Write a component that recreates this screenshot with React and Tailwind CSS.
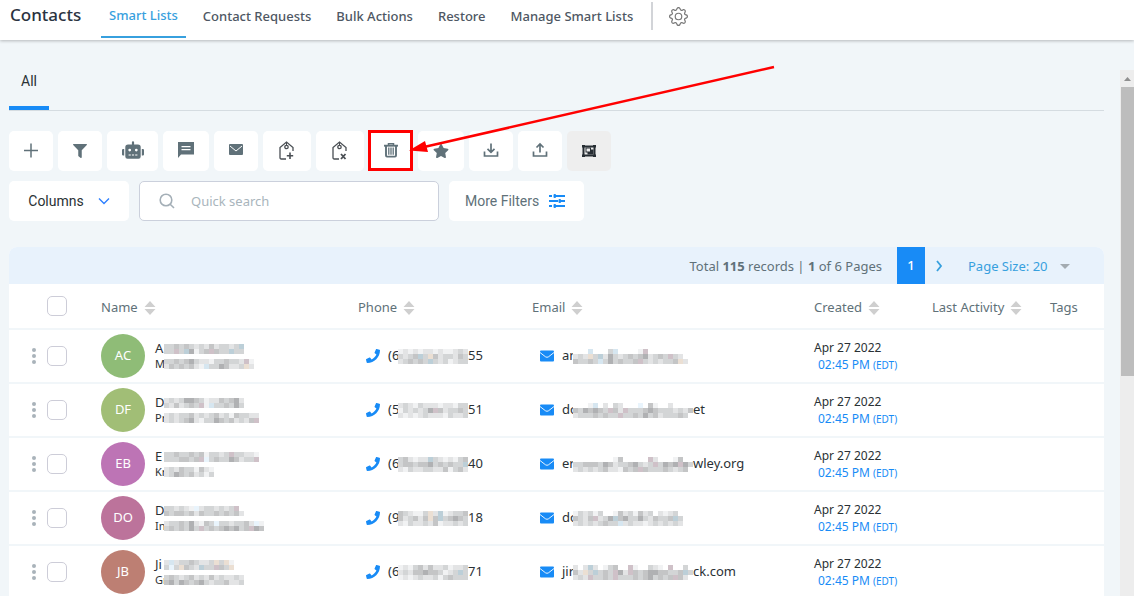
import React from "react";
import { FaFilter, FaRobot, FaStar, FaPhone } from "react-icons/fa";
import { BsGear } from "react-icons/bs";

const NAV = ["Contact Requests", "Bulk Actions", "Restore", "Manage Smart Lists"];

const SHADES = {
  1: "#f1f2f3", 2: "#e3e4e5", 3: "#d3d5d6", 4: "#c4c5c6", 5: "#b0b1b3",
  a: "#d6e6f0", b: "#cfc1c8", c: "#ebdfd3", d: "#bccfd8", e: "#e9f4fc",
};

const ROWS = [
  {
    initials: "AC", color: "bg-[#8fbc77]", first: "A", company: "M",
    name: ["334343232423323d", "33b3d5134b433d33"], org: ["3343453221334332b1", "24343421a3354223c2"],
    phone: ["(6", "55", ["121212212112323", "3234d3c42332433", "234343d32312333"]],
    email: ["an", "", ["000a0003a00001b00000000", "232c3d2532343452343b32", "43343a3534334b3232334c2"]],
  },
  {
    initials: "DF", color: "bg-[#a1be76]", first: "D", company: "Pr",
    name: ["2323554312243452", "3242343b1a334353"], org: ["2323342323423143322", "232345213354342324b"],
    phone: ["(5", "51", ["232132221221332", "1323235b4233434", "2121232221322332"]],
    email: ["do", "et", ["0001a02032000e0410020000", "4354543b42b3334543332324", "233343433b3343534233343"]],
  },
  {
    initials: "EB", color: "bg-[#bd74b5]", first: "E", company: "Kr",
    name: ["3343343413323b33221", "3334434be343354233b"], org: ["23243314210", "2354342313"],
    phone: ["(6", "40", ["342122d32121343", "3443445343433d3", "213223322413422"]],
    email: ["er", "wley.org", ["000000001400000b20001400", "3344435423345323b3545b53", "2323234221434b433343234"]],
  },
  {
    initials: "DO", color: "bg-[#bc739b]", first: "D", company: "In",
    name: ["332321e2332323b", "4344342433434342"], org: ["2334352143e3323342e1", "3434353b343454534b54"],
    phone: ["(9", "18", ["432113c2d12334c", "423424c4d34543c", "213223241223233"]],
    email: ["do", "", ["1323130014231423021230", "4324b235d45335324334d3", "232323433a232212323232"]],
  },
  {
    initials: "JB", color: "bg-[#bd7f73]", first: "Ji", company: "Gr",
    name: ["2a23343223c3c1", "3e3c432d33b43c"], org: ["3432342324232232", "4535434532334223"],
    phone: ["(6", "71", ["121342422312232", "232445443123d32", "121232231343333"]],
    email: ["jir", "ck.com", ["202d2013400b1003210b003", "42c3d343b52b4345544334d3", "232b3343b33343453434b42"]],
  },
];

function Mosaic({ rows, cols }) {
  return (
    <svg width={cols * 5} height={rows.length * 5} className="shrink-0 bg-white" shapeRendering="crispEdges" aria-hidden="true">
      {rows.map((row, y) =>
        [...row].slice(0, cols).map((c, x) =>
          SHADES[c] ? <rect key={x + "-" + y} x={x * 5} y={y * 5} width="5" height="5" fill={SHADES[c]} /> : null
        )
      )}
    </svg>
  );
}

function TagIcon({ remove }) {
  return (
    <svg width="18" height="20" viewBox="0 0 18 20" fill="none" stroke="#4a4f54" strokeWidth="1.3">
      <path d="M8 18H3.2C2.5 18 2 17.500 2 16.800V6.500L8.500 1L15 6.500V10" />
      <circle cx="8.500" cy="6" r="1.700" />
      <path d="M8.500 1V4" strokeWidth="1" />
      {remove ? <path d="M10 13L14.500 18M14.500 13L10 18" strokeWidth="1.800" /> : <path d="M12 11.500V18M8.800 14.800H15.200" strokeWidth="1.600" />}
    </svg>
  );
}

const ICONS = {
  plus: (
    <svg width="16" height="16" viewBox="0 0 16 16" fill="none" stroke="currentColor" strokeWidth="1.500"><path d="M8 0.500V14.500M1 7.500H15" /></svg>
  ),
  filter: <FaFilter size={14} />,
  robot: <FaRobot size={22} className="mb-0.5" />,
  message: (
    <svg width="18" height="20" viewBox="0 0 18 20" fill="currentColor">
      <path fillRule="evenodd" d="M1 1H17V13.500H4L1 17ZM4.500 5V6.200H13.500V5ZM4.500 8V9.200H13.500V8Z" />
    </svg>
  ),
  mail: (
    <svg width="16" height="18" viewBox="0 0 16 18">
      <rect x="1" y="2" width="14" height="11" rx="1" fill="currentColor" />
      <path d="M2 4L8 9L14 4" fill="none" stroke="#fff" strokeWidth="1" />
    </svg>
  ),
  tagAdd: <TagIcon />,
  tagRemove: <TagIcon remove />,
  trash: (
    <svg width="14" height="18" viewBox="0 0 14 18" fill="none" stroke="currentColor">
      <path d="M0 3.700H14" strokeWidth="1.900" />
      <path d="M4.500 3V1.700H9.500V3" strokeWidth="1.500" />
      <path d="M2 3.500V13.500C2 14.200 2.400 14.600 3 14.600H11C11.600 14.600 12 14.200 12 13.500V3.500" strokeWidth="1.900" />
      <path d="M4.800 5.500V12.800M7 5.500V12.800M9.200 5.500V12.800" strokeWidth="1.300" />
    </svg>
  ),
  star: <FaStar size={16} />,
  download: (
    <svg width="16" height="18" viewBox="0 0 16 18" fill="none" stroke="currentColor" strokeWidth="1.700">
      <path d="M8 1.500V10M4.500 6.800L8 10.300L11.500 6.800M1.500 9.500V14H14.500V9.500" />
    </svg>
  ),
  upload: (
    <svg width="16" height="18" viewBox="0 0 16 18" fill="none" stroke="currentColor" strokeWidth="1.700">
      <path d="M8 10.500V2M4.500 5.500L8 2L11.500 5.500M1.500 9.500V14H14.500V9.500" />
    </svg>
  ),
  group: (
    <svg width="16" height="16" viewBox="0 0 16 16" fill="#262d33">
      <path d="M1 2H4V2.500H12V2H15V4.500H14.500V11.500H15V14H12V13.500H4V14H1V11.500H1.500V4.500H1Z" />
      <path d="M3.500 4.500H12.500V11.500H3.500Z" fill="#eeeeee" />
      <path fillRule="evenodd" d="M4.500 4.500H10V6.500H12.500V11.500H6.500V9.500H4.500ZM5.500 5.500V8.500H9V5.500Z" />
    </svg>
  ),
};

const TOOLS = [
  ["Add contact", "plus", "w-11"],
  ["Pipeline change", "filter", "w-11"],
  ["Add to automation", "robot", "w-[51px]"],
  ["Send message", "message", "w-[46px]"],
  ["Send email", "mail", "w-11"],
  ["Add tag", "tagAdd", "w-12"],
  ["Remove tag", "tagRemove", "w-12"],
  ["Delete contacts", "trash", "w-11"],
  ["Send review request", "star", "w-[46px]"],
  ["Export contacts", "download", "w-11"],
  ["Import contacts", "upload", "w-11"],
  ["Merge contacts", "group", "w-11"],
];

function Sort() {
  return (
    <svg width="12" height="14" viewBox="0 0 12 14" fill="#cfcfcf" aria-hidden="true">
      <path d="M6 0L11.500 6H0.500ZM0.500 8H11.500L6 14Z" />
    </svg>
  );
}

function Head({ children, sort = true }) {
  return (
    <th scope="col" className="p-0 pt-1 text-left font-normal">
      {sort ? <button className="flex items-center gap-1.5">{children}<Sort /></button> : children}
    </th>
  );
}

function Check({ label }) {
  return <input type="checkbox" aria-label={label} className="size-5 shrink-0 appearance-none rounded-[5px] border border-[#cdcdd8] bg-white checked:bg-[#188bf6]" />;
}

function Contact({ row }) {
  const [p1, p2, pm] = row.phone;
  const [e1, e2, em] = row.email;
  return (
    <tr className="h-[54px] border-b-2 border-[#f1f6f9]">
      <td className="p-0">
        <div className="flex items-center gap-2.5 pl-[22px]">
          <button aria-label="Row menu" className="flex h-5 w-1.5 items-center justify-center text-[#a9b3ba]">
            <svg width="4" height="16" viewBox="0 0 4 16" fill="currentColor"><circle cx="2" cy="2" r="2" /><circle cx="2" cy="8" r="2" /><circle cx="2" cy="14" r="2" /></svg>
          </button>
          <Check label={"Select " + row.initials} />
        </div>
      </td>
      <td className="p-0">
        <div className="flex items-center gap-2.5">
          <span className={"flex size-11 shrink-0 items-center justify-center rounded-full text-[13px] text-white " + row.color}>{row.initials}</span>
          <div>
            <div className="flex h-4 items-center text-[13px]"><span className="w-[9px]">{row.first}</span><Mosaic rows={row.name} cols={20} /></div>
            <div className="flex h-3.5 items-center text-[11px]"><span className="w-[9px]">{row.company}</span><Mosaic rows={row.org} cols={22} /></div>
          </div>
        </div>
      </td>
      <td className="p-0">
        <a href="#call" className="flex items-center pl-2">
          <FaPhone size={14} className="mr-2 shrink-0 text-[#188bf6]" />
          <span className="w-2.5">{p1}</span><Mosaic rows={pm} cols={14} /><span>{p2}</span>
        </a>
      </td>
      <td className="p-0">
        <a href="#email" className="flex items-center pl-2">
          <svg width="14" height="12" viewBox="0 0 14 12" className="mr-2 shrink-0">
            <rect y="0.500" width="14" height="11" rx="1" fill="#188bf6" />
            <path d="M0 2.500L5.500 6.800Q7 7.800 8.500 6.800L14 2.500" fill="none" stroke="#fff" strokeWidth="0.900" />
          </svg>
          <span className="w-[11px]">{e1}</span><Mosaic rows={em} cols={24} /><span>{e2}</span>
        </a>
      </td>
      <td className="p-0 text-[12px] leading-[17px]">
        <div>Apr 27 2022</div>
        <div className="pl-1 text-[#188bf6]">02:45 PM <span className="text-[10px]">(EDT)</span></div>
      </td>
      <td className="p-0" />
      <td className="p-0" />
    </tr>
  );
}

export default function App() {
  return (
    <div className="relative flex h-screen flex-col overflow-hidden bg-[#f1f6f9] font-['Noto_Sans',sans-serif] text-[13px] text-[#2a3135]">
      <header className="z-10 flex h-10 shrink-0 items-start bg-white pl-2.5 shadow-[0_1px_3px_rgba(0,0,0,0.250)]">
        <h1 className="w-[91px] text-[17px] leading-[30px] font-medium text-[#2a3341]">Contacts</h1>
        <nav className="flex gap-[9px] font-medium text-[#4e5763]">
          <a href="#smart-lists" className="h-[38px] border-b-2 border-[#37a0de] px-2 leading-[30px] text-[#37a0de]">Smart Lists</a>
          {NAV.map((n) => <a key={n} href="#nav" className="px-2 leading-8">{n}</a>)}
        </nav>
        <div className="mt-0.5 ml-2.5 flex h-7 items-center border-l-2 border-[#d2d4d8] pl-4">
          <button aria-label="Settings" className="text-[#777]"><BsGear size={19} /></button>
        </div>
      </header>

      <div className="flex min-h-0 flex-1">
        <main className="min-w-0 flex-1 pt-[17px] pr-4 pl-[9px]">
          <div className="flex h-[54px] border-b border-[#d5dce1]">
            <button className="w-10 border-b-4 border-[#188bf6] pt-1 pb-1 font-['Roboto',sans-serif] text-[14px] text-[#2a3135]">All</button>
          </div>

          <div className="mt-5 flex gap-[5px] text-[#607179]">
            {TOOLS.map(([label, icon, width]) => (
              <div key={label} className="relative">
                <button aria-label={label} className={"flex h-10 items-center justify-center rounded-[5px] " + width + (icon === "group" ? " bg-[#eeeeee]" : " bg-white")}>{ICONS[icon]}</button>
                {icon === "trash" && <span className="pointer-events-none absolute -top-px right-0 bottom-0 -left-px border-[3px] border-[#f00]" />}
              </div>
            ))}
          </div>

          <div className="mt-2.5 flex gap-2.5 font-['Roboto',sans-serif] text-[14px]">
            <button className="flex h-10 w-[120px] items-center justify-center gap-3.5 rounded-[5px] bg-white">
              Columns
              <svg width="12" height="8" viewBox="0 0 12 8" fill="none" stroke="#2f80ff" strokeWidth="1.400"><path d="M1 1.500L6 6.500L11 1.500" /></svg>
            </button>
            <label className="flex h-10 w-[300px] items-center gap-4 rounded-[5px] border border-[#cbd0dc] bg-white pl-[19px]">
              <svg width="16" height="16" viewBox="0 0 16 16" fill="none" stroke="#a4afb7" strokeWidth="1.600"><circle cx="7" cy="7" r="5.800" /><path d="M11.200 11.200L15 15" /></svg>
              <input aria-label="Quick search" placeholder="Quick search" className="min-w-0 flex-1 pt-0.5 font-['Noto_Sans',sans-serif] text-[13px] outline-none placeholder:text-[#a9b5bc]" />
            </label>
            <button className="flex h-10 w-[135px] items-center gap-2.5 rounded-[5px] bg-white pl-4 text-[#607179]">
              More Filters
              <svg width="16" height="14" viewBox="0 0 16 14" stroke="#188bf6" fill="#188bf6" strokeWidth="1.800">
                <path d="M0 2H3M5 2H16M0 7H9M11 7H16M0 12H3M5 12H16" />
                <rect x="4.500" y="0" width="2.500" height="4" rx="1" stroke="none" /><rect x="9.500" y="5" width="2.500" height="4" rx="1" stroke="none" /><rect x="4.500" y="10" width="2.500" height="4" rx="1" stroke="none" />
              </svg>
            </button>
          </div>

          <section className="mt-[26px] overflow-hidden rounded-t-lg bg-white">
            <div className="flex h-[37px] items-center justify-end bg-[#e8f2fc] pr-[34px] text-[#607179]">
              <p className="pt-0.5">Total <b>115</b> records | <b>1</b> of 6 Pages</p>
              <button className="ml-[15px] h-full w-7 bg-[#188bf6] font-medium text-white">1</button>
              <button aria-label="Next page" className="w-7 pl-[11px] text-[#37a0de]">
                <svg width="8" height="12" viewBox="0 0 8 12" fill="none" stroke="currentColor" strokeWidth="1.800"><path d="M1 1L5 6L1 11" /></svg>
              </button>
              <label className="ml-[15px] flex items-center pt-0.5 text-[#37a0de]">
                <select aria-label="Page size" defaultValue="20" className="w-[92px] appearance-none bg-transparent outline-none">
                  <option value="20">Page Size: 20</option>
                  <option value="50">Page Size: 50</option>
                </select>
                <svg width="10" height="5" viewBox="0 0 10 5" fill="#a3abb1"><path d="M0 0H10L5 5Z" /></svg>
              </label>
            </div>
            <table className="w-full table-fixed border-collapse">
              <colgroup>
                <col className="w-[92px]" /><col className="w-[257px]" /><col className="w-[174px]" /><col /><col className="w-[118px]" /><col className="w-[118px]" /><col className="w-[54px]" />
              </colgroup>
              <thead>
                <tr className="h-[45px] border-b-2 border-[#f1f6f9] text-[#607179]">
                  <th className="p-0 pl-[38px]"><div className="flex"><Check label="Select all" /></div></th>
                  <Head>Name</Head><Head>Phone</Head><Head>Email</Head><Head>Created</Head><Head>Last Activity</Head><Head sort={false}>Tags</Head>
                </tr>
              </thead>
              <tbody>{ROWS.map((r) => <Contact key={r.initials} row={r} />)}</tbody>
            </table>
          </section>
        </main>
        <div className="mt-[30px] flex w-3.5 flex-col items-end bg-[#ededed]" aria-hidden="true">
          <div className="flex h-[17px] w-full shrink-0 items-center justify-center"><svg width="7" height="4" viewBox="0 0 7 4" fill="#8f8f8f"><path d="M3.500 0L7 4H0Z" /></svg></div>
          <div className="h-[289px] w-[13px] shrink-0 bg-[#bdbdbd]" />
        </div>
      </div>

      <svg className="pointer-events-none absolute top-[60px] left-[405px] z-20" width="375" height="100" viewBox="405 60 375 100" aria-hidden="true">
        <path d="M774 67L424 147" stroke="#f00" strokeWidth="2.500" />
        <path d="M409 150.500L425 141L428 152Z" fill="#f00" />
      </svg>
    </div>
  );
}
